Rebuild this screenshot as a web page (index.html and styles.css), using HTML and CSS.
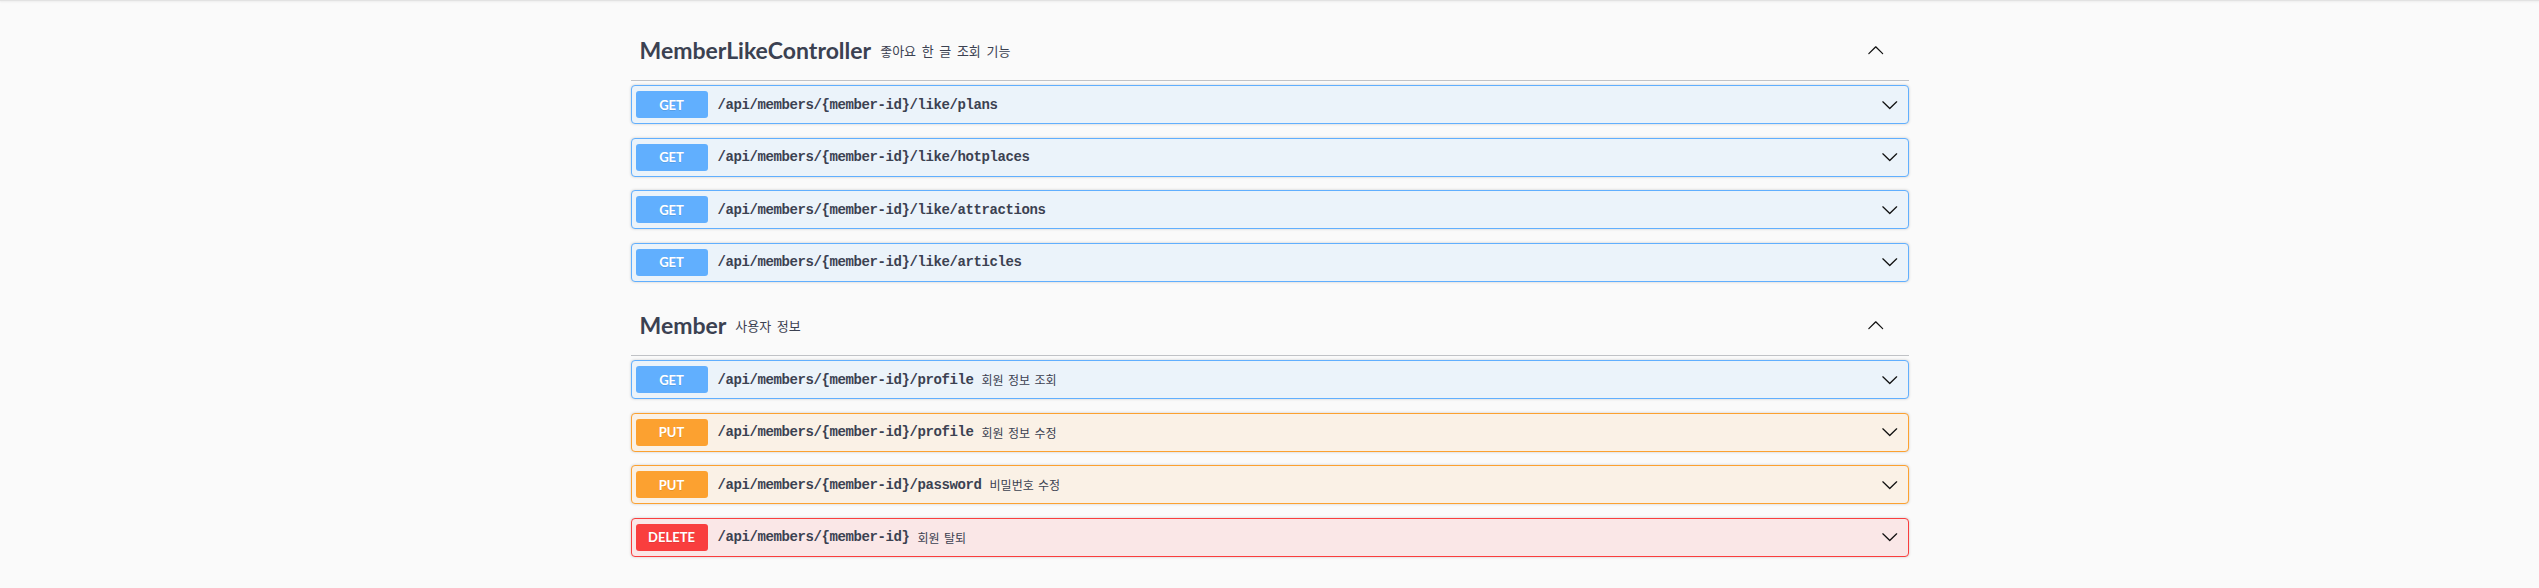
FILE: index.html
```html
<!DOCTYPE html>
<html lang="ko">
<head>
<meta charset="utf-8">
<title>Swagger UI</title>
<link rel="stylesheet" href="styles.css">
</head>
<body>
<div class="topbar"></div>
<div class="wrapper">
  <section class="tag">
    <h3 class="tag-header">
      <span class="tag-name">MemberLikeController</span>
      <small class="tag-desc">좋아요 한 글 조회 기능</small>
      <button class="tag-toggle" type="button">
        <svg class="arrow" viewBox="0 0 20 20"><path d="M17.418 14.908c.272.268.709.268.979 0s.271-.701 0-.969l-7.908-7.83c-.27-.268-.707-.268-.979 0l-7.908 7.83c-.27.268-.27.701 0 .969.271.268.709.268.979 0L10 7.767l7.418 7.141z"/></svg>
      </button>
    </h3>
    <div class="opblock get">
      <span class="method">GET</span><span class="path">/api/members/{member-id}/like/plans</span><span class="desc"></span>
      <svg class="arrow" viewBox="0 0 20 20"><path d="M17.418 6.109c.272-.268.709-.268.979 0s.271.701 0 .969l-7.908 7.83c-.27.268-.707.268-.979 0l-7.908-7.83c-.27-.268-.27-.701 0-.969.271-.268.709-.268.979 0L10 13.25l7.418-7.141z"/></svg>
    </div>
    <div class="opblock get">
      <span class="method">GET</span><span class="path">/api/members/{member-id}/like/hotplaces</span><span class="desc"></span>
      <svg class="arrow" viewBox="0 0 20 20"><path d="M17.418 6.109c.272-.268.709-.268.979 0s.271.701 0 .969l-7.908 7.83c-.27.268-.707.268-.979 0l-7.908-7.83c-.27-.268-.27-.701 0-.969.271-.268.709-.268.979 0L10 13.25l7.418-7.141z"/></svg>
    </div>
    <div class="opblock get">
      <span class="method">GET</span><span class="path">/api/members/{member-id}/like/attractions</span><span class="desc"></span>
      <svg class="arrow" viewBox="0 0 20 20"><path d="M17.418 6.109c.272-.268.709-.268.979 0s.271.701 0 .969l-7.908 7.83c-.27.268-.707.268-.979 0l-7.908-7.83c-.27-.268-.27-.701 0-.969.271-.268.709-.268.979 0L10 13.25l7.418-7.141z"/></svg>
    </div>
    <div class="opblock get">
      <span class="method">GET</span><span class="path">/api/members/{member-id}/like/articles</span><span class="desc"></span>
      <svg class="arrow" viewBox="0 0 20 20"><path d="M17.418 6.109c.272-.268.709-.268.979 0s.271.701 0 .969l-7.908 7.83c-.27.268-.707.268-.979 0l-7.908-7.83c-.27-.268-.27-.701 0-.969.271-.268.709-.268.979 0L10 13.25l7.418-7.141z"/></svg>
    </div>
  </section>
  <section class="tag">
    <h3 class="tag-header">
      <span class="tag-name">Member</span>
      <small class="tag-desc">사용자 정보</small>
      <button class="tag-toggle" type="button">
        <svg class="arrow" viewBox="0 0 20 20"><path d="M17.418 14.908c.272.268.709.268.979 0s.271-.701 0-.969l-7.908-7.83c-.27-.268-.707-.268-.979 0l-7.908 7.83c-.27.268-.27.701 0 .969.271.268.709.268.979 0L10 7.767l7.418 7.141z"/></svg>
      </button>
    </h3>
    <div class="opblock get">
      <span class="method">GET</span><span class="path">/api/members/{member-id}/profile</span><span class="desc">회원 정보 조회</span>
      <svg class="arrow" viewBox="0 0 20 20"><path d="M17.418 6.109c.272-.268.709-.268.979 0s.271.701 0 .969l-7.908 7.83c-.27.268-.707.268-.979 0l-7.908-7.83c-.27-.268-.27-.701 0-.969.271-.268.709-.268.979 0L10 13.25l7.418-7.141z"/></svg>
    </div>
    <div class="opblock put">
      <span class="method">PUT</span><span class="path">/api/members/{member-id}/profile</span><span class="desc">회원 정보 수정</span>
      <svg class="arrow" viewBox="0 0 20 20"><path d="M17.418 6.109c.272-.268.709-.268.979 0s.271.701 0 .969l-7.908 7.83c-.27.268-.707.268-.979 0l-7.908-7.83c-.27-.268-.27-.701 0-.969.271-.268.709-.268.979 0L10 13.25l7.418-7.141z"/></svg>
    </div>
    <div class="opblock put">
      <span class="method">PUT</span><span class="path">/api/members/{member-id}/password</span><span class="desc">비밀번호 수정</span>
      <svg class="arrow" viewBox="0 0 20 20"><path d="M17.418 6.109c.272-.268.709-.268.979 0s.271.701 0 .969l-7.908 7.83c-.27.268-.707.268-.979 0l-7.908-7.83c-.27-.268-.27-.701 0-.969.271-.268.709-.268.979 0L10 13.25l7.418-7.141z"/></svg>
    </div>
    <div class="opblock delete">
      <span class="method">DELETE</span><span class="path">/api/members/{member-id}</span><span class="desc">회원 탈퇴</span>
      <svg class="arrow" viewBox="0 0 20 20"><path d="M17.418 6.109c.272-.268.709-.268.979 0s.271.701 0 .969l-7.908 7.83c-.27.268-.707.268-.979 0l-7.908-7.83c-.27-.268-.27-.701 0-.969.271-.268.709-.268.979 0L10 13.25l7.418-7.141z"/></svg>
    </div>
  </section>
</div>
</body>
</html>
```

FILE: styles.css
```css
html, body {
  margin: 0;
  padding: 0;
  background: #fafafa;
}

.topbar {
  height: 1px;
  background: #e2e2e2;
  box-shadow: 0 1px 2px rgba(0, 0, 0, 0.08);
}

.wrapper {
  width: 1278px;
  margin: 0 auto;
  padding-top: 19px;
}

.tag-header {
  display: flex;
  align-items: center;
  height: 60px;
  margin: 0 0 4px 0;
  padding: 0 0 0 9px;
  border-bottom: 1px solid rgba(59, 65, 81, 0.3);
  color: #3b4151;
}

.tag-name {
  font-family: Lato, "Noto Sans", sans-serif;
  font-weight: 700;
  font-size: 23px;
  color: #3b4151;
}

.tag-desc {
  flex: 1;
  margin-left: 9px;
  font-family: "Noto Sans CJK KR", sans-serif;
  font-weight: 400;
  font-size: 13px;
  word-spacing: 2px;
  color: #3b4151;
  padding-top: 1px;
}

.tag-toggle {
  border: none;
  background: none;
  padding: 0;
  margin: 0 24px 0 0;
  display: flex;
  align-items: center;
  cursor: pointer;
}

.arrow {
  width: 17.5px;
  height: 17.5px;
  fill: #111;
  flex: none;
}

.opblock {
  box-sizing: border-box;
  height: 39px;
  display: flex;
  align-items: center;
  padding: 0 9px 0 4px;
  margin-bottom: 13.5px;
  border: 1px solid;
  border-radius: 4px;
  box-shadow: 0 0 3px rgba(0, 0, 0, 0.19);
}

.opblock.get {
  background: #ebf3fa;
  border-color: #61affe;
}

.opblock.put {
  background: #faf1e6;
  border-color: #fca130;
}

.opblock.delete {
  background: #fae7e7;
  border-color: #f93e3e;
}

.method {
  flex: none;
  width: 72px;
  height: 27px;
  display: flex;
  align-items: center;
  justify-content: center;
  border-radius: 3px;
  color: #fff;
  font-family: Lato, "Liberation Sans", sans-serif;
  font-weight: 700;
  font-size: 13px;
  text-shadow: 0 1px 0 rgba(0, 0, 0, 0.1);
}

.get .method { background: #61affe; }
.put .method { background: #fca130; }
.delete .method { background: #f93e3e; }

.path {
  margin-left: 10px;
  font-family: "Liberation Mono", "DejaVu Sans Mono", monospace;
  font-weight: 700;
  font-size: 14px;
  letter-spacing: -0.4px;
  color: #3b4151;
}

.desc {
  flex: 1;
  margin-left: 8px;
  font-family: "Noto Sans CJK KR", sans-serif;
  font-size: 12px;
  word-spacing: 1px;
  color: #3b4151;
}
```
